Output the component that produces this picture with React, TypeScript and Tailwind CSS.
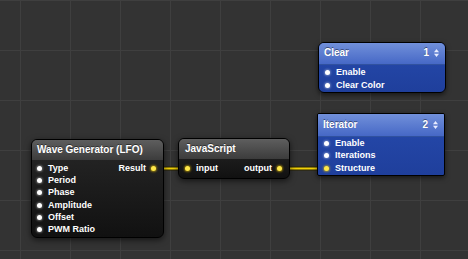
import React from "react";

const font = { fontFamily: '"Liberation Sans", Arial, sans-serif' };

function Dot({ on }: { on?: boolean }) {
  return (
    <span
      className={
        on
          ? "block w-[5px] h-[5px] shrink-0 rounded-full bg-[#ffe84a] shadow-[0_0_2px_1px_rgba(230,190,0,0.55)]"
          : "block w-[5px] h-[5px] shrink-0 rounded-full bg-white shadow-[0_0_2px_1px_rgba(255,255,255,0.3)]"
      }
    />
  );
}

function Arrows() {
  return (
    <svg width="5" height="8" viewBox="0 0 5 8" className="ml-[5px]">
      <polygon points="0,3.3 2.5,0 5,3.3" fill="#e8ecff" />
      <polygon points="0,4.7 2.5,8 5,4.7" fill="#e8ecff" />
    </svg>
  );
}

function InPort({ label, on }: { label: string; on?: boolean }) {
  return (
    <div className="flex items-center h-[12.2px] gap-[6px]">
      <Dot on={on} />
      <span className="text-[9px] font-bold text-white leading-none">{label}</span>
    </div>
  );
}

const title = "text-[10px] font-bold text-white leading-none [text-shadow:0_-1px_0_rgba(0,0,0,0.45)]";

export default function App() {
  return (
    <div
      style={font}
      className="relative w-[468px] h-[259px] overflow-hidden bg-[#333333] [background-image:linear-gradient(to_right,#3f3f3f_1px,transparent_1px),linear-gradient(to_bottom,#3f3f3f_1px,transparent_1px)] [background-size:50px_50px] [background-position:20px_0px]"
    >
      {/* wires */}
      <svg className="absolute inset-0" width="468" height="259">
        <line x1="150" y1="168.5" x2="190" y2="168.5" stroke="#2a2400" strokeWidth="4" />
        <line x1="150" y1="168.5" x2="190" y2="168.5" stroke="#f2d20a" strokeWidth="2" />
        <line x1="278" y1="168.5" x2="328" y2="168.5" stroke="#2a2400" strokeWidth="4" />
        <line x1="278" y1="168.5" x2="328" y2="168.5" stroke="#f2d20a" strokeWidth="2" />
      </svg>

      {/* Clear */}
      <div className="absolute left-[318px] top-[42px] w-[128px] h-[51px] rounded-[6px] border border-black overflow-hidden bg-[linear-gradient(to_bottom,#264aac,#1f3f9c)] shadow-[0_2px_5px_rgba(0,0,0,0.55)]">
        <div className="h-[22px] flex items-center justify-between pl-[5px] pr-[6px] pb-[1px] bg-[linear-gradient(to_bottom,#7190da,#4668c6)] border-b border-[#30519f]">
          <span className={title}>Clear</span>
          <span className="flex items-center">
            <span className={title}>1</span>
            <Arrows />
          </span>
        </div>
        <div className="pl-[6px] pt-[1.5px]">
          <div className="flex items-center h-[12.5px] gap-[6px]">
            <Dot />
            <span className="text-[9px] font-bold text-white leading-none">Enable</span>
          </div>
          <div className="flex items-center h-[12.5px] gap-[6px]">
            <Dot />
            <span className="text-[9px] font-bold text-white leading-none">Clear Color</span>
          </div>
        </div>
      </div>

      {/* Iterator */}
      <div className="absolute left-[317px] top-[113px] w-[128px] h-[63px] rounded-[2px] border border-black overflow-hidden bg-[linear-gradient(to_bottom,#264aac,#1f3f9c)] shadow-[0_2px_5px_rgba(0,0,0,0.55)]">
        <div className="h-[23px] flex items-center justify-between pl-[5px] pr-[6px] bg-[linear-gradient(to_bottom,#7190da,#4668c6)] border-b border-[#30519f]">
          <span className={title}>Iterator</span>
          <span className="flex items-center">
            <span className={title}>2</span>
            <Arrows />
          </span>
        </div>
        <div className="pl-[6px] pt-[0.6px]">
          <InPort label="Enable" />
          <InPort label="Iterations" />
          <InPort label="Structure" on />
        </div>
      </div>

      {/* Wave Generator */}
      <div className="absolute left-[31px] top-[139px] w-[133px] h-[99px] rounded-[6px] border border-black overflow-hidden bg-[linear-gradient(to_bottom,#272727,#111111)] shadow-[0_2px_6px_rgba(0,0,0,0.6)]">
        <div className="h-[20px] flex items-center pl-[5px] bg-[linear-gradient(to_bottom,#5e5e5e,#3c3c3c)]">
          <span className={title}>Wave Generator (LFO)</span>
        </div>
        <div className="flex justify-between pl-[5px] pr-[7px] pt-[2.4px]">
          <div>
            <InPort label="Type" />
            <InPort label="Period" />
            <InPort label="Phase" />
            <InPort label="Amplitude" />
            <InPort label="Offset" />
            <InPort label="PWM Ratio" />
          </div>
          <div className="flex items-center h-[12.2px] gap-[5px]">
            <span className="text-[9px] font-bold text-white leading-none">Result</span>
            <Dot on />
          </div>
        </div>
      </div>

      {/* JavaScript */}
      <div className="absolute left-[178px] top-[138px] w-[112px] h-[41px] rounded-[6px] border border-black overflow-hidden bg-[linear-gradient(to_bottom,#272727,#111111)] shadow-[0_2px_6px_rgba(0,0,0,0.6)]">
        <div className="h-[20px] flex items-center pl-[6px] bg-[linear-gradient(to_bottom,#5e5e5e,#3c3c3c)]">
          <span className={title}>JavaScript</span>
        </div>
        <div className="flex items-center justify-between pl-[6px] pr-[7px] pt-[3.4px]">
          <div className="flex items-center h-[12.2px] gap-[6px]">
            <Dot on />
            <span className="text-[9px] font-bold text-white leading-none">input</span>
          </div>
          <div className="flex items-center h-[12.2px] gap-[5px]">
            <span className="text-[9px] font-bold text-white leading-none">output</span>
            <Dot on />
          </div>
        </div>
      </div>
    </div>
  );
}
